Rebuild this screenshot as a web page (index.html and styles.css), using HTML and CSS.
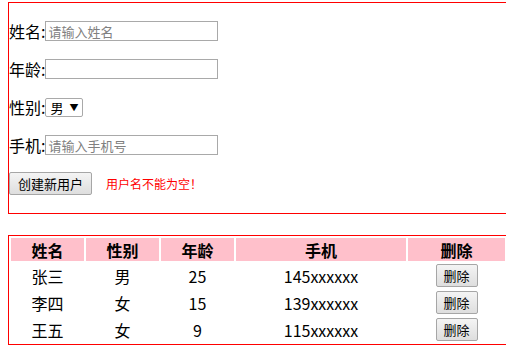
FILE: index.html
```html
<!DOCTYPE html>
<html lang="zh-CN">
<head>
  <meta charset="UTF-8" />
  <title>用户管理</title>
  <link rel="stylesheet" href="styles.css">
</head>
<body>

  <div class="form-box">
    <div class="row">
      <label>姓名:</label><input type="text" placeholder="请输入姓名">
    </div>
    <div class="row">
      <label>年龄:</label><input type="text">
    </div>
    <div class="row">
      <label>性别:</label><span class="select">男<span class="arrow">▼</span></span>
    </div>
    <div class="row">
      <label>手机:</label><input type="text" placeholder="请输入手机号">
    </div>
    <div class="row">
      <button class="btn-create">创建新用户</button>
      <span class="error">用户名不能为空！</span>
    </div>
  </div>

  <table class="user-table">
    <thead>
      <tr>
        <th class="c-name">姓名</th>
        <th class="c-sex">性别</th>
        <th class="c-age">年龄</th>
        <th class="c-phone">手机</th>
        <th class="c-del">删除</th>
      </tr>
    </thead>
    <tbody>
      <tr>
        <td>张三</td>
        <td>男</td>
        <td>25</td>
        <td>145xxxxxx</td>
        <td><button class="btn-del">删除</button></td>
      </tr>
      <tr>
        <td>李四</td>
        <td>女</td>
        <td>15</td>
        <td>139xxxxxx</td>
        <td><button class="btn-del">删除</button></td>
      </tr>
      <tr>
        <td>王五</td>
        <td>女</td>
        <td>9</td>
        <td>115xxxxxx</td>
        <td><button class="btn-del">删除</button></td>
      </tr>
    </tbody>
  </table>

</body>
</html>
```

FILE: styles.css
```css
html {
  overflow: hidden;
}
body {
  margin: 2px 8px 0;
  font-family: "Noto Sans CJK SC", "Liberation Sans", sans-serif;
  font-size: 16px;
  color: #000;
  background: #fff;
}
.form-box {
  width: 500px;
  border: 1px solid red;
  padding: 18px 0 0 0;
  height: 192px;
}
.row {
  display: flex;
  align-items: center;
  height: 20px;
  margin-bottom: 18px;
}
.row label {
  line-height: 20px;
}
.row input {
  box-sizing: border-box;
  width: 173px;
  height: 20px;
  margin: 0;
  padding: 1px 2px;
  border: 1px solid #a9a9a9;
  font-family: inherit;
  font-size: 13px;
}
.row input::placeholder {
  color: #808080;
}
.select {
  box-sizing: border-box;
  display: flex;
  align-items: center;
  width: 38px;
  height: 19px;
  padding: 0 4px;
  border: 1px solid #a9a9a9;
  border-radius: 2px;
  font-size: 13px;
}
.select .arrow {
  margin-left: auto;
  font-size: 9px;
}
.btn-create {
  box-sizing: border-box;
  width: 83px;
  height: 23px;
  margin: 0;
  border: 1px solid #a6a6a6;
  border-radius: 2px;
  background: linear-gradient(#f4f4f4, #dedede);
  font-family: inherit;
  font-size: 13px;
  padding: 0;
}
.error {
  margin-left: 14px;
  color: red;
  font-size: 12px;
}
.user-table {
  margin-top: 21px;
  width: 500px;
  border: 1px solid red;
  border-spacing: 2px;
}
.user-table th {
  background: pink;
  height: 23px;
  padding: 0;
  font-size: 16px;
  line-height: 20px;
}
.user-table td {
  text-align: center;
  height: 25px;
  padding: 0;
  font-size: 16px;
  line-height: 20px;
}
.c-name, .c-sex, .c-age {
  width: 73px;
}
.c-phone {
  width: 170px;
}
.btn-del {
  box-sizing: border-box;
  width: 42px;
  height: 23px;
  margin: 0;
  padding: 0;
  border: 1px solid #a6a6a6;
  border-radius: 2px;
  background: linear-gradient(#f4f4f4, #dedede);
  font-family: inherit;
  font-size: 13px;
}
```
